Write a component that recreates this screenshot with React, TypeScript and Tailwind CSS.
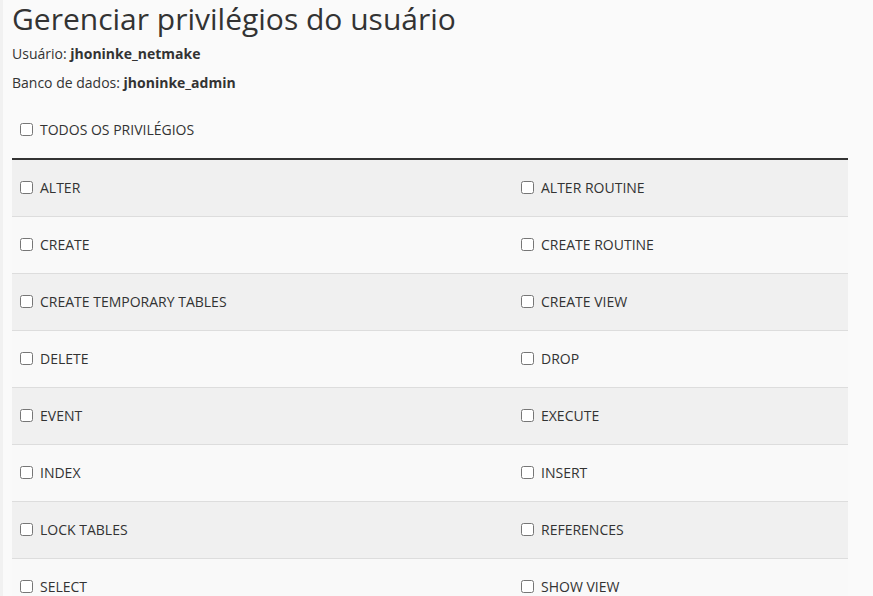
import React from 'react';

// Privilégios em pares (coluna esquerda, coluna direita)
const privilegios: [string, string][] = [
  ['ALTER', 'ALTER ROUTINE'],
  ['CREATE', 'CREATE ROUTINE'],
  ['CREATE TEMPORARY TABLES', 'CREATE VIEW'],
  ['DELETE', 'DROP'],
  ['EVENT', 'EXECUTE'],
  ['INDEX', 'INSERT'],
  ['LOCK TABLES', 'REFERENCES'],
  ['SELECT', 'SHOW VIEW'],
];

const Opcao: React.FC<{ label: string }> = ({ label }) => (
  <label className="flex items-center h-full pl-2 pb-[2px]">
    <input type="checkbox" className="m-0 w-[13px] h-[13px] mt-[1px]" />
    <span className="ml-[7px]">{label}</span>
  </label>
);

export default function App() {
  return (
    <div
      className="min-h-screen bg-[#fafafa] text-[#333] text-[14px] border-l-[3px] border-[#f1f1f1]"
      style={{ fontFamily: '"Open Sans", "Liberation Sans", sans-serif' }}
    >
      <div className="pl-[9px]">
        <h1 className="text-[30px] leading-[36px] pt-[1px] font-normal">Gerenciar privilégios do usuário</h1>
        <p className="mt-[7px] leading-[20px]">
          Usuário: <b className="font-bold">jhoninke_netmake</b>
        </p>
        <p className="mt-[9px] leading-[20px]">
          Banco de dados: <b className="font-bold">jhoninke_admin</b>
        </p>
        <div className="h-[20px] mt-[27px]">
          <Opcao label="TODOS OS PRIVILÉGIOS" />
        </div>

        <div className="mt-[18px] w-[836px] border-t-2 border-[#333]">
          {privilegios.map(([a, b], i) => (
            <div
              key={a}
              className={`grid grid-cols-[501px_335px] h-[57px] border-b border-[#ddd] ${
                i % 2 === 0 ? 'bg-[#f0f0f0]' : 'bg-[#f9f9f9]'
              }`}
            >
              <Opcao label={a} />
              <Opcao label={b} />
            </div>
          ))}
        </div>
      </div>
    </div>
  );
}
